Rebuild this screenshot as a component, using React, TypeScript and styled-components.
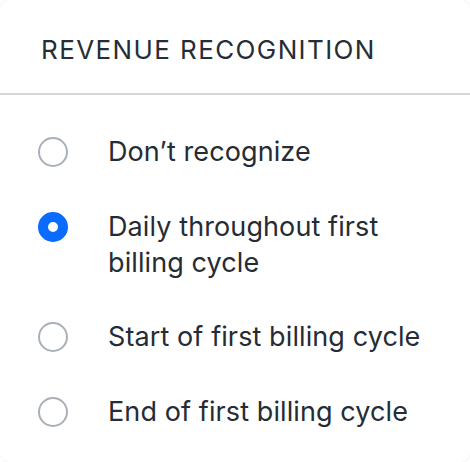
import React, { useState } from "react";
import styled, { createGlobalStyle } from "styled-components";

const GlobalStyle = createGlobalStyle`
  html, body {
    margin: 0;
    padding: 0;
    background: #ffffff;
  }
  body {
    font-family: Inter, "Liberation Sans", sans-serif;
    -webkit-font-smoothing: antialiased;
  }
`;

const Card = styled.section`
  box-sizing: border-box;
  width: 470px;
  height: 462px;
  background: #ffffff;
  border-radius: 10px;
  box-shadow: 0 0 0 1px rgba(0, 0, 0, 0.035);
  overflow: hidden;
  display: flex;
  flex-direction: column;
`;

const Header = styled.header`
  padding: 33px 0 26px 41px;
  border-bottom: 2px solid #d2d5d9;
`;

const Title = styled.h2`
  margin: 0;
  font-size: 26px;
  line-height: 34px;
  font-weight: 400;
  letter-spacing: 1.4px;
  color: #272d35;
`;

const OptionList = styled.div`
  display: flex;
  flex-direction: column;
  gap: 38.5px;
  padding: 39px 20px 0 38px;
`;

const Option = styled.label`
  display: flex;
  align-items: flex-start;
  gap: 40px;
  cursor: pointer;
`;

const HiddenInput = styled.input`
  position: absolute;
  opacity: 0;
  width: 0;
  height: 0;
  margin: 0;
`;

const Circle = styled.span<{ $checked: boolean }>`
  box-sizing: border-box;
  flex: 0 0 auto;
  width: 30px;
  height: 30px;
  margin-top: 3px;
  border-radius: 50%;
  border: ${(p) => (p.$checked ? "10px solid #0a6bff" : "2px solid #aab0b8")};
  background: #ffffff;
`;

const Label = styled.span`
  font-size: 27px;
  line-height: 36px;
  font-weight: 400;
  letter-spacing: 0.1px;
  color: #262c34;
`;

const options = [
  { id: "none", label: "Don’t recognize" },
  { id: "daily", label: "Daily throughout first billing cycle" },
  { id: "start", label: "Start of first billing cycle" },
  { id: "end", label: "End of first billing cycle" },
];

export default function App() {
  const [value, setValue] = useState("daily");
  return (
    <>
      <GlobalStyle />
      <Card>
        <Header>
          <Title>REVENUE RECOGNITION</Title>
        </Header>
        <OptionList role="radiogroup">
          {options.map((o) => (
            <Option key={o.id}>
              <HiddenInput
                type="radio"
                name="revenue"
                checked={value === o.id}
                onChange={() => setValue(o.id)}
              />
              <Circle $checked={value === o.id} />
              <Label>{o.label}</Label>
            </Option>
          ))}
        </OptionList>
      </Card>
    </>
  );
}
